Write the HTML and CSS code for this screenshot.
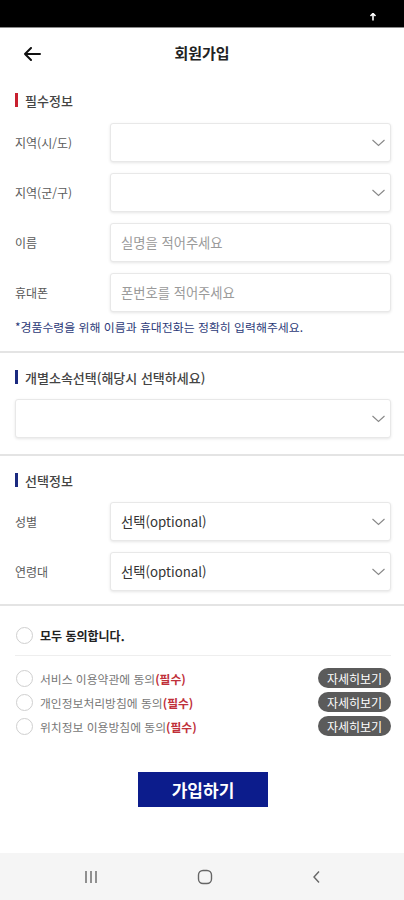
FILE: index.html
```html
<!DOCTYPE html>
<html lang="ko">
<head>
<meta charset="utf-8">
<title>회원가입</title>
<link rel="stylesheet" href="styles.css">
</head>
<body>
<div class="page">
  <div class="status">
    <svg class="status-icon" width="8" height="8" viewBox="0 0 8 8"><path d="M4 0.5 L4 7.5 M1.5 3 L4 0.5 L6.5 3" stroke="#fff" stroke-width="1.6" fill="none"/></svg>
  </div>
  <header class="header">
    <svg class="back" width="18" height="14" viewBox="0 0 18 14"><path d="M17 7 H2 M8 1 L2 7 L8 13" stroke="#111" stroke-width="2" fill="none" stroke-linecap="round" stroke-linejoin="round"/></svg>
    <h1 class="title">회원가입</h1>
    <span></span>
  </header>

  <section class="sec sec-first">
    <div class="sec-title"><span class="bar red"></span>필수정보</div>
    <div class="fields">
      <div class="label">지역(시/도)</div>
      <div class="box"><span class="val"></span><svg class="chev" width="15" height="8" viewBox="0 0 15 8"><path d="M1.5 1 L7.5 6.5 L13.5 1" stroke="#888" stroke-width="1.1" fill="none"/></svg></div>
      <div class="label">지역(군/구)</div>
      <div class="box"><span class="val"></span><svg class="chev" width="15" height="8" viewBox="0 0 15 8"><path d="M1.5 1 L7.5 6.5 L13.5 1" stroke="#888" stroke-width="1.1" fill="none"/></svg></div>
      <div class="label">이름</div>
      <div class="box"><span class="ph">실명을 적어주세요</span></div>
      <div class="label">휴대폰</div>
      <div class="box"><span class="ph">폰번호를 적어주세요</span></div>
    </div>
    <p class="note">*경품수령을 위해 이름과 휴대전화는 정확히 입력해주세요.</p>
  </section>
  <div class="divider"></div>

  <section class="sec">
    <div class="sec-title"><span class="bar navy"></span>개별소속선택(해당시 선택하세요)</div>
    <div class="box full"><span class="val"></span><svg class="chev" width="15" height="8" viewBox="0 0 15 8"><path d="M1.5 1 L7.5 6.5 L13.5 1" stroke="#888" stroke-width="1.1" fill="none"/></svg></div>
  </section>
  <div class="divider d2"></div>

  <section class="sec">
    <div class="sec-title"><span class="bar navy"></span>선택정보</div>
    <div class="fields">
      <div class="label">성별</div>
      <div class="box"><span class="val dark">선택(optional)</span><svg class="chev" width="15" height="8" viewBox="0 0 15 8"><path d="M1.5 1 L7.5 6.5 L13.5 1" stroke="#888" stroke-width="1.1" fill="none"/></svg></div>
      <div class="label">연령대</div>
      <div class="box"><span class="val dark">선택(optional)</span><svg class="chev" width="15" height="8" viewBox="0 0 15 8"><path d="M1.5 1 L7.5 6.5 L13.5 1" stroke="#888" stroke-width="1.1" fill="none"/></svg></div>
    </div>
  </section>
  <div class="divider d3"></div>

  <section class="agree">
    <div class="agree-all"><span class="circle"></span><span class="all-text">모두 동의합니다.</span></div>
    <div class="thin"></div>
    <div class="agree-row"><span class="circle"></span><span class="agree-text">서비스 이용약관에 동의<b class="req">(필수)</b></span><span class="detail">자세히보기</span></div>
    <div class="agree-row"><span class="circle"></span><span class="agree-text">개인정보처리방침에 동의<b class="req">(필수)</b></span><span class="detail">자세히보기</span></div>
    <div class="agree-row"><span class="circle"></span><span class="agree-text">위치정보 이용방침에 동의<b class="req">(필수)</b></span><span class="detail">자세히보기</span></div>
  </section>

  <div class="submit-wrap"><button class="submit">가입하기</button></div>

  <nav class="navbar">
    <svg width="14" height="14" viewBox="0 0 14 14"><path d="M2 1 V13 M7 1 V13 M12 1 V13" stroke="#666" stroke-width="1.4"/></svg>
    <svg width="16" height="16" viewBox="0 0 16 16"><rect x="1.5" y="1.5" width="13" height="13" rx="4.5" stroke="#666" stroke-width="1.4" fill="none"/></svg>
    <svg width="10" height="14" viewBox="0 0 10 14"><path d="M7 1.5 L2 7 L7 12.5" stroke="#666" stroke-width="1.4" fill="none"/></svg>
  </nav>
</div>
</body>
</html>
```

FILE: styles.css
```css
* { box-sizing: border-box; }
html, body { margin: 0; padding: 0; background: #fff; }
body {
  font-family: "Noto Sans CJK KR", "Noto Sans", sans-serif;
  color: #333;
}
.page {
  width: 404px;
  min-height: 900px;
  display: flex;
  flex-direction: column;
}
.status {
  height: 28px;
  background: #000;
  border-bottom: 1px solid #8a8a8a;
  display: flex;
  align-items: center;
  justify-content: flex-end;
  padding-right: 27px;
}
.status-icon { margin-top: 6px; }
.header {
  height: 52px;
  display: grid;
  grid-template-columns: 60px 1fr 60px;
  align-items: center;
}
.back { margin-left: 23px; }
.title {
  margin: 0;
  text-align: center;
  font-size: 15px;
  font-weight: 700;
  color: #222;
  line-height: 20px;
  position: relative;
  top: -1px;
}
.sec { padding: 14px 13px 0 15px; }
.sec-first { padding-top: 10px; }
.sec-title {
  height: 20px;
  display: flex;
  align-items: center;
  gap: 7px;
  font-size: 13px;
  font-weight: 500;
  color: #444;
}
.bar { width: 3px; height: 14px; display: block; }
.bar.red { background: #c8202f; }
.bar.navy { background: #1b2a80; }
.fields {
  margin-top: 13px;
  display: grid;
  grid-template-columns: 95px 1fr;
  row-gap: 11px;
}
.sec:not(.sec-first) .fields { margin-top: 12px; }
.label {
  font-size: 12px;
  color: #5a5a5a;
  display: flex;
  align-items: center;
  height: 39px;
}
.box {
  height: 39px;
  border: 1px solid #e8e8e8;
  border-radius: 3px;
  box-shadow: 0 1px 3px rgba(0,0,0,0.10);
  display: flex;
  align-items: center;
  justify-content: space-between;
  padding: 0 4px 0 10px;
  background: #fff;
}
.box.full { margin-top: 12px; }
.chev { margin-top: 1px; }
.ph { font-size: 13.3px; color: #9a9a9a; }
.val { font-size: 13.3px; }
.val.dark { color: #333; }
.note {
  margin: 8px 0 0;
  font-size: 11.9px;
  line-height: 14px;
  color: #2c3a78;
}
.divider {
  height: 2px;
  background: #e4e4e4;
  margin-top: 17px;
}
.divider.d2 { margin-top: 16px; }
.divider.d3 { margin-top: 13px; }
.agree { padding: 19px 13px 0 16px; }
.agree-all {
  height: 20px;
  display: flex;
  align-items: center;
  gap: 7px;
}
.circle {
  width: 17px;
  height: 17px;
  border: 1px solid #cfcfcf;
  border-radius: 50%;
  flex: none;
}
.all-text { font-size: 12px; font-weight: 700; color: #222; }
.thin { height: 1px; background: #eee; margin: 10px 0 10px -1px; }
.agree-row {
  height: 24px;
  display: flex;
  align-items: center;
  gap: 7px;
}
.agree-text { font-size: 11.8px; color: #777; flex: 1; }
.req { color: #c0303a; font-weight: 700; }
.detail {
  width: 73px;
  height: 20px;
  border-radius: 10px;
  background: #5b5b5b;
  color: #fff;
  font-size: 12px;
  display: flex;
  align-items: center;
  justify-content: center;
}
.submit-wrap {
  display: flex;
  justify-content: center;
  margin-top: 34px;
  padding-left: 2px;
}
.submit {
  width: 130px;
  height: 35px;
  border: none;
  background: #0c1c8c;
  color: #fff;
  font-family: "Noto Sans CJK KR", sans-serif;
  font-size: 17px;
  font-weight: 700;
  padding: 0;
}
.navbar {
  margin-top: auto;
  height: 47px;
  background: #f5f5f5;
  display: flex;
  align-items: center;
  justify-content: center;
  gap: 99px;
  padding-left: 2px;
}
```
